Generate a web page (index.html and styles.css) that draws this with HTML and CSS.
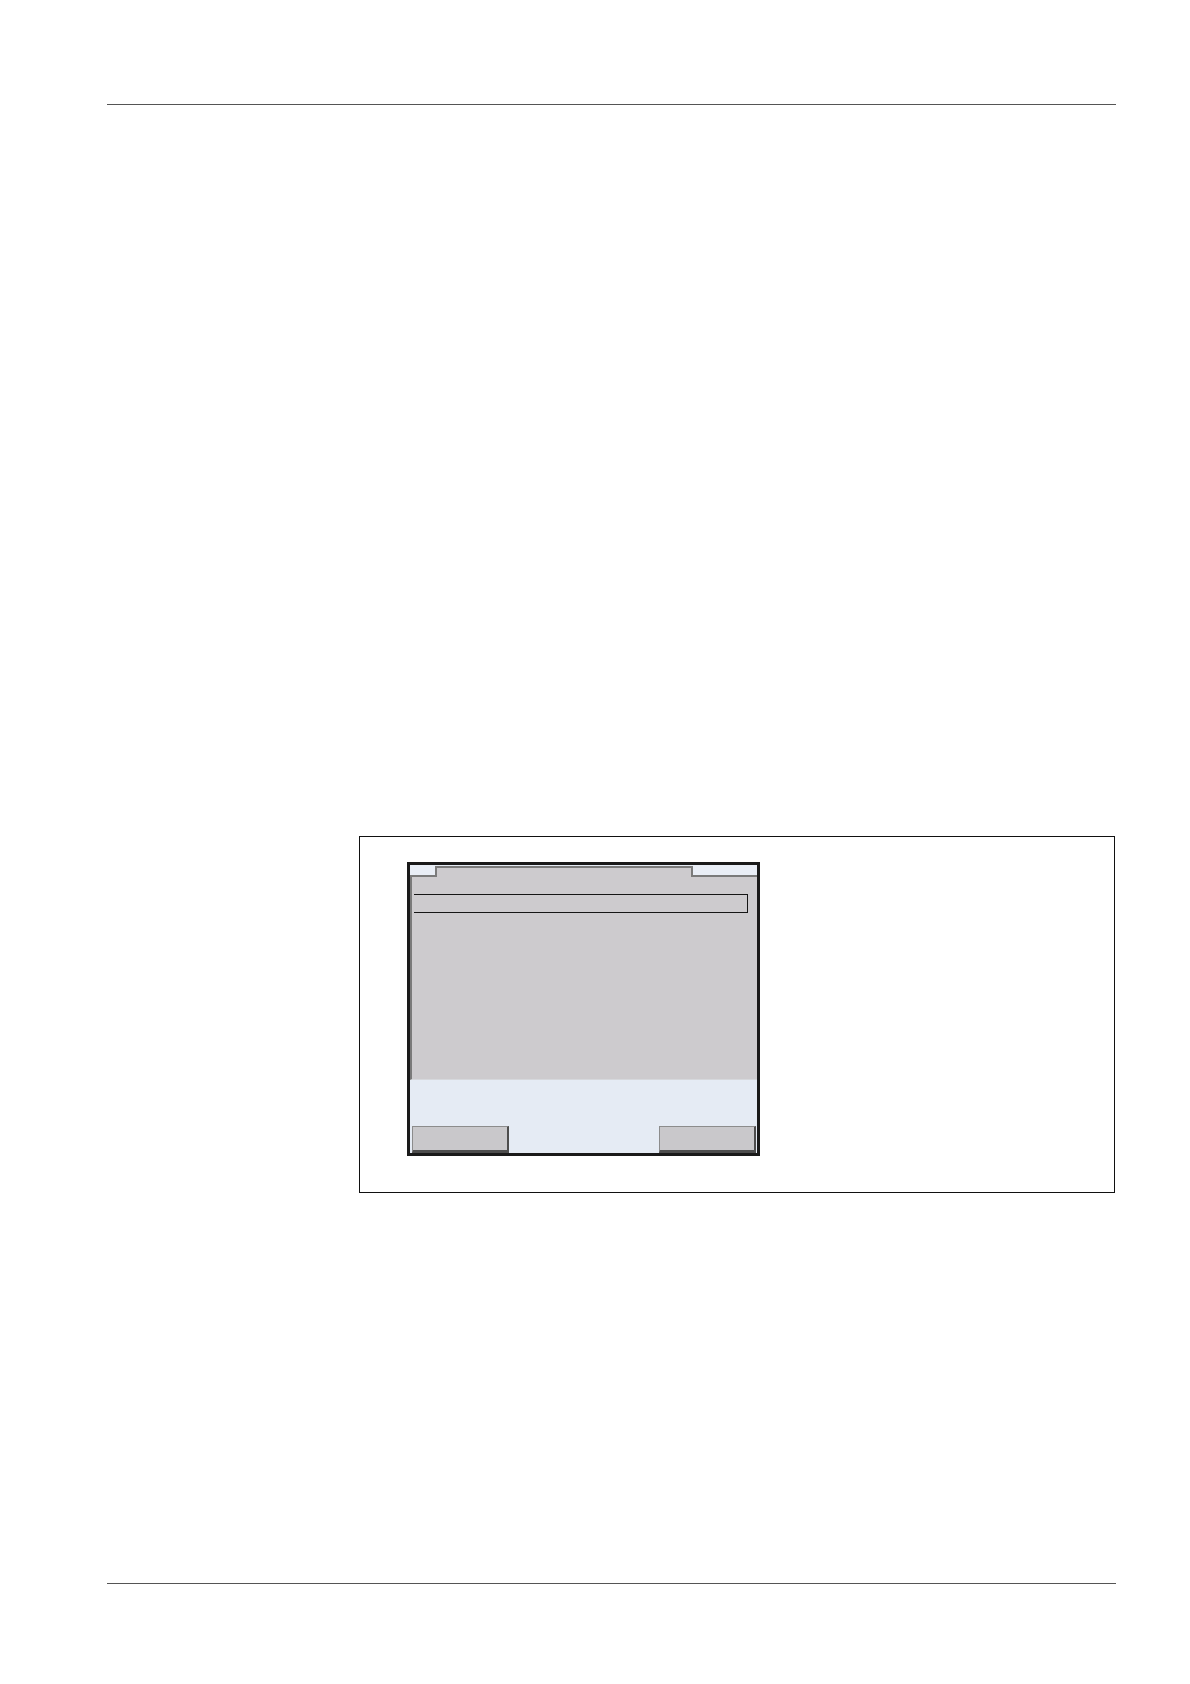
FILE: index.html
```html
<!DOCTYPE html>
<html>
<head>
<meta charset="utf-8">
<title>Display</title>
<link rel="stylesheet" href="styles.css">
</head>
<body>
<div class="page">
  <div class="rule rule-top"></div>
  <div class="content">
    <div class="figure">
      <div class="screen">
        <div class="tabs">
          <div class="tab tab-left"></div>
          <div class="tab-mid"></div>
          <div class="tab tab-right"></div>
        </div>
        <div class="panel">
          <div class="selection"></div>
        </div>
        <div class="softkeys">
          <div class="softkey"></div>
          <div class="softkey"></div>
        </div>
      </div>
    </div>
  </div>
  <div class="rule rule-bottom"></div>
</div>
</body>
</html>
```
FILE: styles.css
```css
html, body {
  margin: 0;
  padding: 0;
  background: #ffffff;
  font-family: "Liberation Sans", Arial, sans-serif;
}
.page {
  width: 1190px;
  height: 1684px;
  padding-top: 104px;
  box-sizing: border-box;
}
.rule {
  margin-left: 107px;
  width: 1009px;
  height: 0;
  border-top: 1.5px solid #555555;
}
.content {
  padding-left: 359px;
  padding-top: 731px;
  height: 1478px;
  box-sizing: border-box;
}
.figure {
  width: 756px;
  height: 357px;
  box-sizing: border-box;
  border: 1.3px solid #111111;
  padding-left: 47px;
  padding-top: 25px;
}
.screen {
  width: 353px;
  height: 294px;
  box-sizing: border-box;
  border: 3px solid #1a1a1a;
  background: #e5ebf4;
  display: flex;
  flex-direction: column;
}
.tabs {
  display: flex;
  height: 12px;
  flex: none;
}
.tab {
  background: #e9eef6;
  border-bottom: 2px solid #7a7a7a;
  box-sizing: border-box;
  height: 12px;
}
.tab-left {
  width: 25px;
}
.tab-right {
  width: 64px;
}
.tab-mid {
  flex: 1;
  background: #cdcbce;
  border-top: 2px solid #7a7a7a;
  border-left: 2px solid #7a7a7a;
  border-right: 2px solid #7a7a7a;
  margin-top: 1px;
}
.panel {
  height: 203px;
  flex: none;
  background: #cdcbce;
  border-left: 2px solid #7a7a7a;
  border-bottom: 1px solid #d6d8dc;
  box-sizing: border-box;
  padding-top: 17px;
  padding-left: 2px;
}
.selection {
  width: 334px;
  height: 19px;
  box-sizing: border-box;
  border-top: 1.5px solid #151515;
  border-bottom: 1.5px solid #151515;
  border-right: 1.5px solid #151515;
}
.softkeys {
  flex: 1;
  display: flex;
  justify-content: space-between;
  align-items: flex-end;
  padding-left: 2px;
  padding-right: 1px;
}
.softkey {
  width: 97px;
  height: 27px;
  box-sizing: border-box;
  background: #c9c8cb;
  border-top: 1.5px solid #8c8c8c;
  border-left: 1.5px solid #8c8c8c;
  border-right: 2.5px solid #4d4d4d;
  border-bottom: 3px solid #4d4d4d;
}
```
